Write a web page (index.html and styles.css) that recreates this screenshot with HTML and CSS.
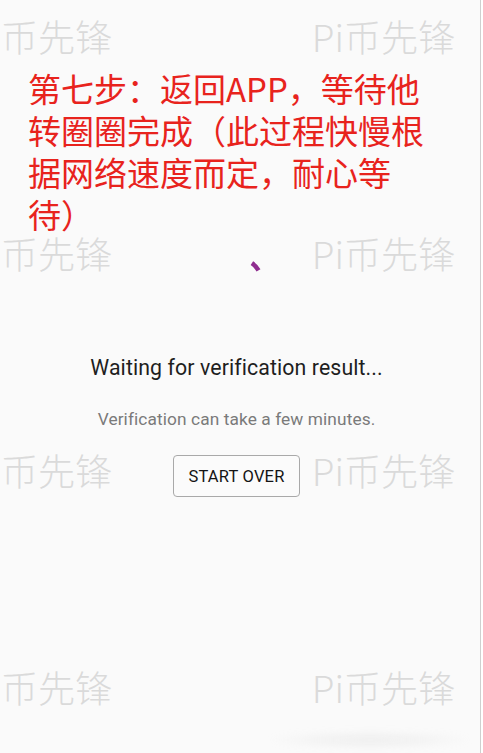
FILE: index.html
```html
<!DOCTYPE html>
<html lang="zh-CN">
<head>
<meta charset="utf-8">
<title>Waiting for verification</title>
<link rel="stylesheet" href="styles.css">
</head>
<body>
<div class="screen">
  <h1 class="note">第七步：返回APP，等待他转圈圈完成（此过程快慢根据网络速度而定，耐心等待）</h1>
  <div class="content">
    <svg class="spinner" width="44" height="44" viewBox="0 0 44 44" aria-hidden="true">
      <path d="M32.89 5.23 A20 20 0 0 1 39.49 12.30" fill="none" stroke="#8f2d8f" stroke-width="4.5"/>
    </svg>
    <p class="title">Waiting for verification result...</p>
    <p class="sub">Verification can take a few minutes.</p>
    <button class="btn" type="button">START OVER</button>
  </div>

  <div class="watermarks" aria-hidden="true">
    <div class="wm-row"><span>币先锋</span><span>Pi币先锋</span></div>
    <div class="wm-row"><span>币先锋</span><span>Pi币先锋</span></div>
    <div class="wm-row"><span>币先锋</span><span>Pi币先锋</span></div>
    <div class="wm-row"><span>币先锋</span><span>Pi币先锋</span></div>
  </div>
  <div class="smudge" aria-hidden="true"></div>
</div>
</body>
</html>
```

FILE: styles.css
```css
html, body {
  margin: 0;
  padding: 0;
  background: #ffffff;
}

.screen {
  position: relative;
  width: 480px;
  height: 753px;
  background: #fafafa;
  border-right: 1px solid #cfcfcf;
  overflow: hidden;
  font-family: Roboto, "Noto Sans", "Noto Sans CJK SC", sans-serif;
}

.note {
  margin: 0;
  padding: 67px 52px 0 28px;
  font-family: "Noto Sans CJK SC", "Noto Sans", sans-serif;
  font-size: 33px;
  font-weight: 400;
  line-height: 42px;
  color: #e8231d;
  line-break: strict;
}

.content {
  display: flex;
  flex-direction: column;
  align-items: center;
  padding-right: 7px;
}

.spinner {
  display: block;
  margin-top: 23px;
  margin-left: 9px;
}

.title {
  margin: 54px 0 0;
  font-size: 21.3px;
  line-height: 24px;
  color: #1e1e1e;
  letter-spacing: 0.1px;
}

.sub {
  margin: 29px 0 0;
  font-size: 17.3px;
  line-height: 20px;
  color: #7a7a7a;
  letter-spacing: 0.1px;
}

.btn {
  margin-top: 26px;
  width: 127px;
  height: 42px;
  padding: 0;
  background: #fbfbfb;
  border: 1px solid #a9a9a9;
  border-radius: 4px;
  font-family: Roboto, "Noto Sans", sans-serif;
  font-size: 16.5px;
  font-weight: 400;
  color: #141414;
  letter-spacing: 0.2px;
}

.watermarks {
  position: absolute;
  left: 0;
  top: 0;
  width: 480px;
  pointer-events: none;
}

.wm-row {
  position: absolute;
  left: 0;
  width: 480px;
  display: flex;
  justify-content: space-between;
  padding: 0 25px 0 1px;
  box-sizing: border-box;
  font-family: "Noto Sans CJK SC", "Noto Sans", sans-serif;
  font-size: 37px;
  line-height: 30px;
  font-weight: 300;
  color: #dadada;
}

.wm-row:nth-child(1) { top: 21px; }
.wm-row:nth-child(2) { top: 238px; }
.wm-row:nth-child(3) { top: 455px; }
.wm-row:nth-child(4) { top: 672px; }

.smudge {
  position: absolute;
  left: 265px;
  top: 730px;
  width: 210px;
  height: 20px;
  border-radius: 50%;
  background: radial-gradient(ellipse at center, rgba(210,210,210,0.3), rgba(225,225,225,0) 70%);
  filter: blur(3px);
  pointer-events: none;
}
```
